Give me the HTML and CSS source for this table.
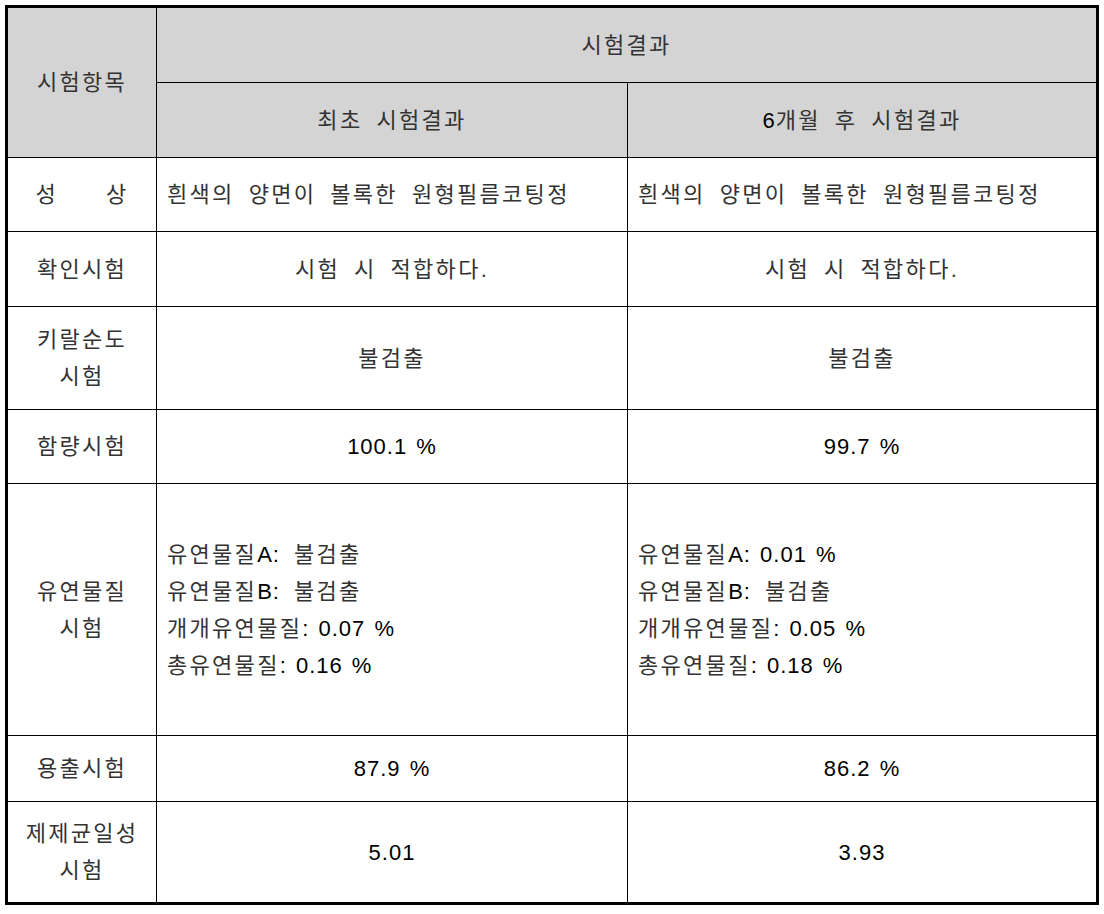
FILE: index.html
```html
<!DOCTYPE html>
<html lang="ko">
<head>
<meta charset="utf-8">
<title>시험결과</title>
<link rel="stylesheet" href="styles.css">
</head>
<body>
<div class="sheet">
  <div class="grid">
    <div class="c hd r2">시험항목</div>
    <div class="c hd c2 last">시험결과</div>
    <div class="c hd">최초 시험결과</div>
    <div class="c hd last"><span class="n">6</span>개월 후 시험결과</div>

    <div class="c"><span class="spread"><span>성</span><span>상</span></span></div>
    <div class="c left">흰색의 양면이 볼록한 원형필름코팅정</div>
    <div class="c left last">흰색의 양면이 볼록한 원형필름코팅정</div>

    <div class="c">확인시험</div>
    <div class="c">시험 시 적합하다.</div>
    <div class="c last">시험 시 적합하다.</div>

    <div class="c">키랄순도<br>시험</div>
    <div class="c">불검출</div>
    <div class="c last">불검출</div>

    <div class="c">함량시험</div>
    <div class="c"><span class="n">100.1 %</span></div>
    <div class="c last"><span class="n">99.7 %</span></div>

    <div class="c">유연물질<br>시험</div>
    <div class="c left">
      <div class="lines">
        <div>유연물질<span class="n">A:</span> 불검출</div>
        <div>유연물질<span class="n">B:</span> 불검출</div>
        <div>개개유연물질<span class="n">: 0.07 %</span></div>
        <div>총유연물질<span class="n">: 0.16 %</span></div>
      </div>
    </div>
    <div class="c left last">
      <div class="lines">
        <div>유연물질<span class="n">A: 0.01 %</span></div>
        <div>유연물질<span class="n">B:</span> 불검출</div>
        <div>개개유연물질<span class="n">: 0.05 %</span></div>
        <div>총유연물질<span class="n">: 0.18 %</span></div>
      </div>
    </div>

    <div class="c">용출시험</div>
    <div class="c"><span class="n">87.9 %</span></div>
    <div class="c last"><span class="n">86.2 %</span></div>

    <div class="c bottom">제제균일성<br>시험</div>
    <div class="c bottom"><span class="n">5.01</span></div>
    <div class="c bottom last"><span class="n">3.93</span></div>
  </div>
</div>
</body>
</html>
```

FILE: styles.css
```css
html, body {
  margin: 0;
  padding: 0;
  background: #ffffff;
}

body {
  font-family: "Liberation Sans", "Noto Sans CJK KR", sans-serif;
  font-size: 22px;
  letter-spacing: 2.3px;
  word-spacing: 5.6px;
  color: #333333;
}

.sheet {
  margin: 5px;
  width: 1094px;
  height: 900px;
  box-sizing: border-box;
  border: 3px solid #000000;
}

.grid {
  display: grid;
  grid-template-columns: 149px 471px 468px;
  grid-template-rows: 75px 75px 74px 75px 103px 74px 252px 66px 100px;
}

.c {
  box-sizing: border-box;
  border-right: 1px solid #000000;
  border-bottom: 1px solid #000000;
  display: flex;
  align-items: center;
  justify-content: center;
  text-align: center;
  line-height: 37px;
}

.c.last {
  border-right: none;
}

.c.bottom {
  border-bottom: none;
}

.hd {
  background: #d4d4d4;
}

.r2 {
  grid-row: span 2;
}

.c2 {
  grid-column: span 2;
}

.left {
  justify-content: flex-start;
  text-align: left;
  padding-left: 10px;
}

.spread {
  display: flex;
  justify-content: space-between;
  width: 93px;
}

.lines {
  display: flex;
  flex-direction: column;
}

.n {
  font-size: 22px;
  color: #000000;
  letter-spacing: 1px;
  word-spacing: 2px;
}
```
